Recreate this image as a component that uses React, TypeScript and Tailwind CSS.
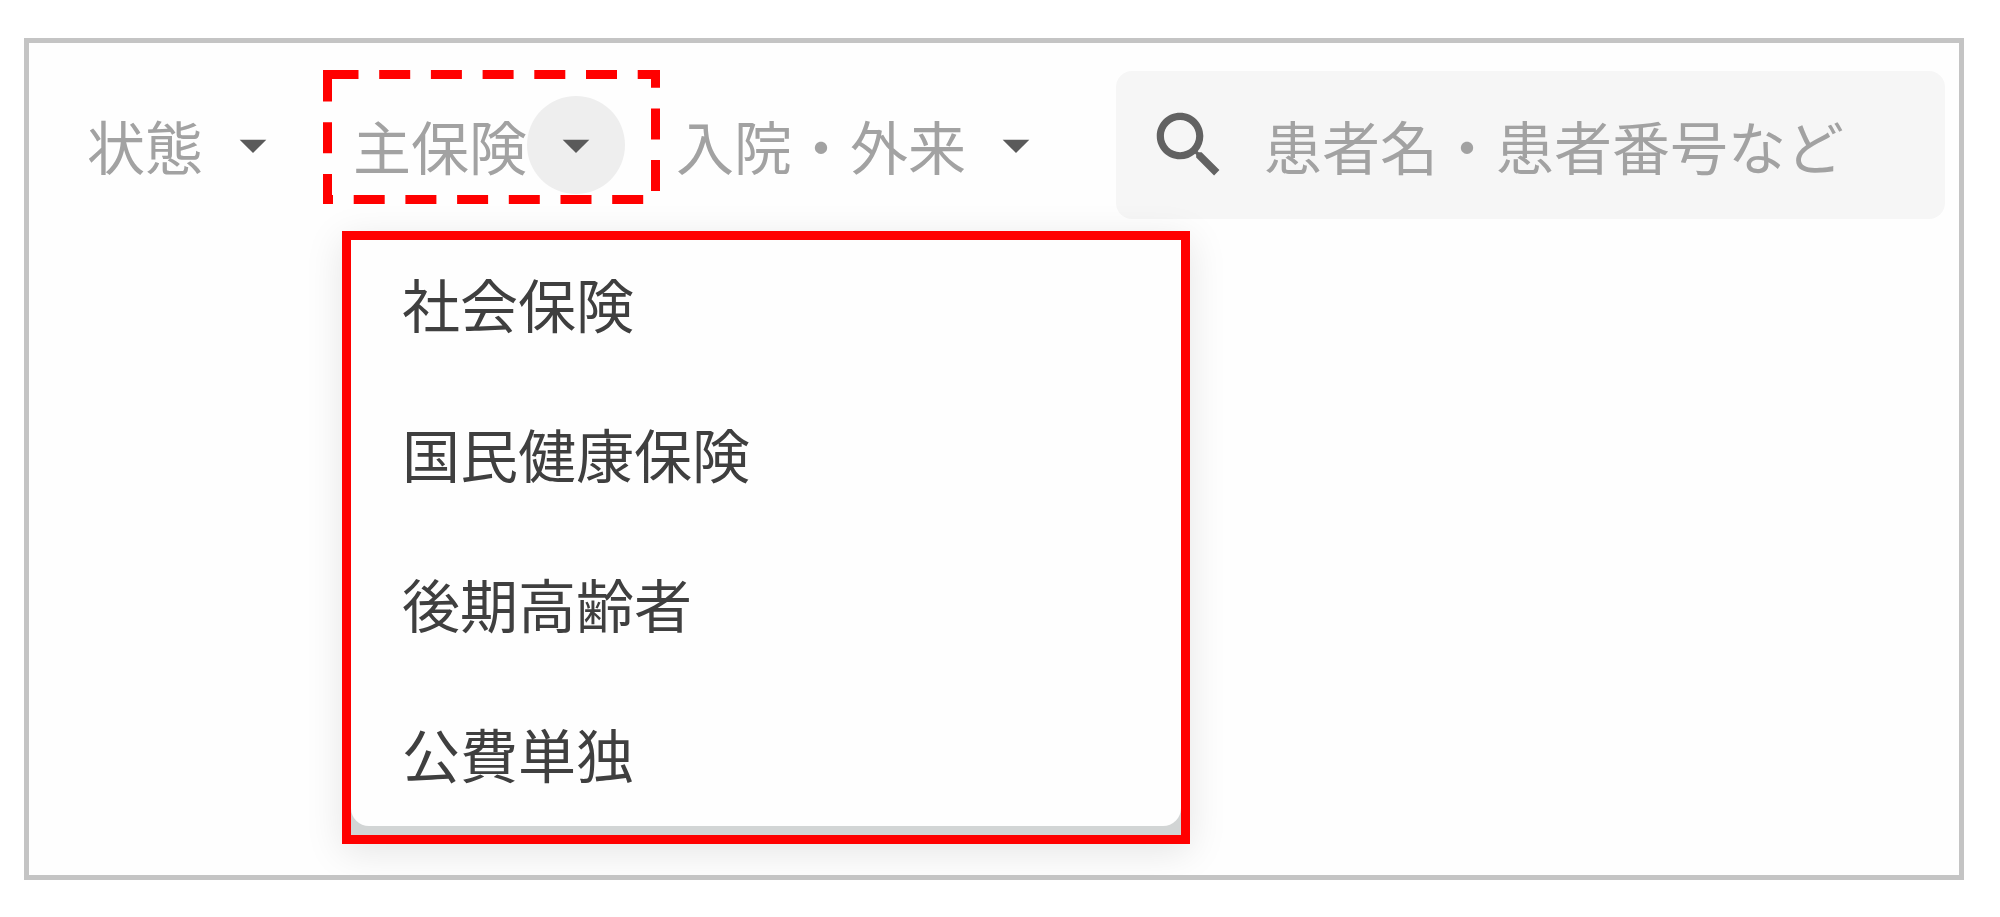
import { useState } from "react";

const insuranceTypes = ["社会保険", "国民健康保険", "後期高齢者", "公費単独"];

const ArrowDropDown = () => (
  <svg viewBox="0 0 24 24" className="w-16 h-16 fill-[#5a5a5a]" aria-hidden="true">
    <path d="M7 10l5 5 5-5z" />
  </svg>
);

const SearchIcon = () => (
  <svg
    viewBox="0 0 24 24"
    className="w-[86px] h-[86px] shrink-0 fill-[#626262]"
    aria-hidden="true"
  >
    <path d="M15.5 14h-.79l-.28-.27C15.41 12.59 16 11.11 16 9.5 16 5.91 13.09 3 9.5 3S3 5.91 3 9.5 5.91 16 9.5 16c1.61 0 3.09-.59 4.23-1.57l.27.28v.79l5 4.99L20.49 19l-4.99-5zm-6 0C7.01 14 5 11.99 5 9.5S7.01 5 9.5 5 14 7.01 14 9.5 11.99 14 9.5 14z" />
  </svg>
);

const DashedFrame = () => (
  <svg
    viewBox="0 0 337 134"
    className="absolute -left-[30px] -top-[26px] w-[337px] h-[134px] pointer-events-none"
    aria-hidden="true"
  >
    <path
      d="M4.5 4.5H332.5V129.5H4.5V0"
      fill="none"
      stroke="#ff0000"
      strokeWidth="9"
      strokeDasharray="31 20.7"
    />
    <path d="M0 0H9V9H0z" fill="#ff0000" />
  </svg>
);

interface FilterSelectProps {
  label: string;
}

const FilterSelect = ({ label }: FilterSelectProps) => (
  <div className="relative shrink-0">
    <select
      aria-label={label}
      className="block appearance-none h-[98px] pr-[98px] text-[#a2a2a2] bg-transparent focus:outline-none"
    >
      <option>{label}</option>
    </select>
    <span className="absolute right-0 top-0 w-[98px] h-[98px] flex items-center justify-center pointer-events-none">
      <ArrowDropDown />
    </span>
  </div>
);

const App = () => {
  const [open, setOpen] = useState(true);
  const [keyword, setKeyword] = useState("");

  return (
    <div className="min-h-screen bg-white pt-[38px] pl-6 pr-9 pb-9 font-['Noto_Sans_CJK_JP',sans-serif] text-[58px]">
      <main className="border-[5px] border-[#c4c4c4] bg-[#fefefe] pt-7 pb-[31px] overflow-hidden">
        <div className="flex items-center gap-[51px] pl-[58px] pr-[14px]">
          <FilterSelect label="状態" />
          <div className="relative shrink-0">
            <button
              type="button"
              aria-haspopup="listbox"
              aria-expanded={open}
              onClick={() => setOpen(!open)}
              className="flex items-center h-[98px] text-[#a2a2a2]"
            >
              主保険
              <span className="w-[98px] h-[98px] rounded-full bg-[#eeeeee] flex items-center justify-center">
                <ArrowDropDown />
              </span>
            </button>
            <DashedFrame />
          </div>
          <FilterSelect label="入院・外来" />
          <label className="flex-1 min-w-0 h-[148px] flex items-center pl-[30px] pr-8 rounded-2xl bg-[#f6f6f6]">
            <SearchIcon />
            <input
              type="text"
              aria-label="患者名・患者番号など"
              placeholder="患者名・患者番号など"
              value={keyword}
              onChange={(e) => setKeyword(e.target.value)}
              className="flex-1 min-w-0 h-[98px] ml-8 bg-transparent placeholder:text-[#a2a2a2] focus:outline-none"
            />
          </label>
        </div>
        {open && (
          <div className="relative mt-3 ml-[313px] w-[848px] border-[9px] border-[#ff0000] bg-[#d2d5d5] shadow-[0_8px_36px_rgba(0,0,0,0.1)]">
            <ul
              role="listbox"
              aria-label="主保険"
              className="mb-[9px] pb-[10px] flex flex-col gap-6 rounded-b-[18px] bg-[#fefefe] text-[#3f3f3f]"
            >
              {insuranceTypes.map((name) => (
                <li
                  key={name}
                  role="option"
                  aria-selected={false}
                  className="h-[126px] pl-[51px] flex items-center"
                >
                  {name}
                </li>
              ))}
            </ul>
          </div>
        )}
      </main>
    </div>
  );
};

export default App;
